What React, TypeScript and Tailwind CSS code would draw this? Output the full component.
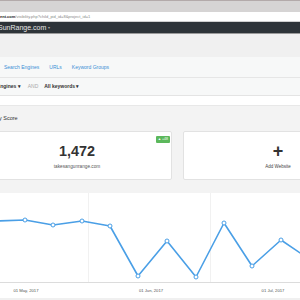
import React from "react";

const pts: [number, number][] = [
  [-3, 28], [25, 27], [53, 32], [82, 28], [110, 33], [138, 83], [167, 48],
  [196, 84], [224, 30], [252, 73], [281, 47], [309, 66],
];

function Chart() {
  const d = pts.map((p, i) => `${i === 0 ? "M" : "L"}${p[0]} ${p[1]}`).join(" ");
  return (
    <svg width="300" height="105" viewBox="0 0 300 105" className="block">
      <line x1="88.5" y1="0" x2="88.5" y2="89" stroke="#f1f1f1" strokeWidth="1" />
      <line x1="210.5" y1="0" x2="210.5" y2="89" stroke="#f1f1f1" strokeWidth="1" />
      <line x1="0" y1="89.5" x2="300" y2="89.5" stroke="#dcdcdc" strokeWidth="1" />
      <path d={d} fill="none" stroke="#4a9fe6" strokeWidth="1.6" strokeLinejoin="round" />
      {pts.map((p, i) => (
        <circle key={i} cx={p[0]} cy={p[1]} r="2" fill="#fff" stroke="#4a9fe6" strokeWidth="1" />
      ))}
      <text x="26" y="99" fontSize="4.2" fill="#555" textAnchor="middle" fontFamily="Liberation Sans, Arial, sans-serif">01 May, 2017</text>
      <text x="151" y="99" fontSize="4.2" fill="#555" textAnchor="middle" fontFamily="Liberation Sans, Arial, sans-serif">01 Jun, 2017</text>
      <text x="273" y="99" fontSize="4.2" fill="#555" textAnchor="middle" fontFamily="Liberation Sans, Arial, sans-serif">01 Jul, 2017</text>
    </svg>
  );
}

export default function App() {
  return (
    <div className="w-[300px] h-[300px] overflow-hidden bg-[#f0f0f0] font-['Liberation_Sans',Arial,sans-serif]">
      {/* browser chrome */}
      <div className="h-[12px] bg-[#d6d4d4] border-t border-[#b3aaaa]" />
      <div className="h-[9px] bg-white flex items-center whitespace-nowrap text-[4px] leading-none">
        <span className="text-[#222] font-bold">ent.com</span>
        <span className="text-[#888]">/visibility.php?child_pid_id=8&amp;project_id=1</span>
      </div>
      <div className="h-[1px] bg-[#d0d0d0]" />
      {/* dark app bar */}
      <div className="h-[12px] bg-[#2e3439] flex items-center whitespace-nowrap border-b border-[#9a9a9a]">
        <span className="-ml-[2px] text-[7px] text-[#e8e8e8] leading-none">SunRange.com</span>
        <span className="ml-[2px] text-[4px] text-[#aaa] leading-none">▾</span>
      </div>
      <div className="h-[23px]" />
      {/* nav */}
      <div className="h-[21px] bg-[#f7f8f8] border-b border-[#e6e6e6] flex items-center gap-[10px] pl-[4px] text-[5px] text-[#3a8fd6] whitespace-nowrap leading-none">
        <span>Search Engines</span>
        <span>URLs</span>
        <span>Keyword Groups</span>
      </div>
      {/* filters */}
      <div className="h-[17px] bg-[#f7f8f8] flex items-center whitespace-nowrap text-[5px] leading-none">
        <span className="-ml-[29px] font-bold text-[#333]">All Search Engines ▾</span>
        <span className="ml-[7px] text-[#aaa]">AND</span>
        <span className="ml-[6px] font-bold text-[#333]">All keywords ▾</span>
      </div>
      <div className="h-[10px] bg-white border-t border-[#e4e4e4]" />
      {/* score section */}
      <div className="h-[88px] bg-[#f3f3f3] border-t border-[#e8e8e8] flex flex-col">
        <div className="h-[25px] flex items-center whitespace-nowrap">
          <span className="-ml-[18px] text-[5.5px] text-[#333] leading-none">Visibility Score</span>
        </div>
        <div className="-ml-[18px] flex gap-[11px]">
          <div className="relative shrink-0 w-[190px] h-[49px] bg-white border border-[#e2e2e2] rounded-[2px] flex flex-col items-center justify-center">
            <span className="absolute right-[1px] top-[4px] bg-[#5cb85c] text-white text-[3.5px] leading-none px-[2px] py-[1.5px] rounded-[1px]">▲ +48</span>
            <span className="text-[14.4px] font-bold text-[#333] leading-none mt-[3px]">1,472</span>
            <span className="text-[4.7px] text-[#555] leading-none mt-[6px]">takesangunrange.com</span>
          </div>
          <div className="shrink-0 w-[190px] h-[49px] bg-white border border-[#e2e2e2] rounded-[2px] flex flex-col items-center justify-center">
            <span className="text-[18px] font-bold text-[#333] leading-none mt-[1px]">+</span>
            <span className="text-[4.5px] text-[#444] leading-none mt-[5px]">Add Website</span>
          </div>
        </div>
      </div>
      {/* chart */}
      <div className="bg-white">
        <Chart />
      </div>
    </div>
  );
}
